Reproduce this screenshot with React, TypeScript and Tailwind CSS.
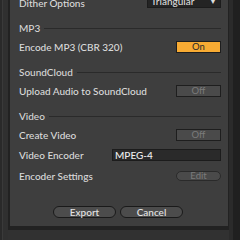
import React from "react";

const font = { fontFamily: 'Lato, "Open Sans", "Liberation Sans", sans-serif' };

function Section({ title, className = "" }: { title: string; className?: string }) {
  return (
    <div className={`flex h-[14px] items-center gap-[4px] ${className}`}>
      <span className="text-[10px] font-medium text-[#d6d6d6]">{title}</span>
      <div className="h-px flex-1 bg-[#2a2a2a]" />
    </div>
  );
}

function Toggle({ on }: { on: boolean }) {
  return (
    <div
      className={`flex h-[12px] w-[45px] items-center justify-center border border-[#1e1e1e] text-[9.5px] leading-none ${
        on ? "bg-[#f8ab33] text-[#2a2a2a]" : "bg-[#4a4a4a] text-[#7b7b7b]"
      }`}
    >
      {on ? "On" : "Off"}
    </div>
  );
}

function Row({ label, children, className = "" }: { label: string; children?: React.ReactNode; className?: string }) {
  return (
    <div className={`flex h-[14px] items-center justify-between ${className}`}>
      <span className="text-[10px] font-medium text-[#dadada]">{label}</span>
      {children}
    </div>
  );
}

export default function App() {
  return (
    <div className="flex h-[240px] w-[240px] overflow-hidden bg-[#2e2e2e]" style={font}>
      {/* left frame strip */}
      <div className="flex h-full w-[8px] shrink-0">
        <div className="w-[2px] bg-[#2a2a2a]" />
        <div className="w-px bg-[#3a3a3a]" />
        <div className="flex-1 bg-[#303030]" />
      </div>

      <div className="flex h-full flex-col">
        <div className="h-[230px] w-[221px] border-b-[4px] border-l-2 border-r border-[#222222] bg-[#3e3e3e] pl-[9px] pr-[7px]">
          <div className="-mt-[4px] flex flex-col">
            <Row label="Dither Options">
              <div className="-mt-[4px] flex h-[14px] w-[74px] items-center justify-between border border-[#1c1c1c] bg-[#242424] pl-[3px] pr-[3px]">
                <span className="text-[10px] font-medium text-[#dddddd]">Triangular</span>
                <span className="text-[8px] text-[#dddddd]">▼</span>
              </div>
            </Row>

            <Section title="MP3" className="mt-[11px]" />
            <Row label="Encode MP3 (CBR 320)" className="mt-[5px]">
              <Toggle on />
            </Row>

            <Section title="SoundCloud" className="mt-[11px]" />
            <Row label="Upload Audio to SoundCloud" className="mt-[5px]">
              <Toggle on={false} />
            </Row>

            <Section title="Video" className="mt-[11px]" />
            <Row label="Create Video" className="mt-[5px]">
              <Toggle on={false} />
            </Row>
            <Row label="Video Encoder" className="mt-[6px]">
              <div className="flex h-[12px] w-[109px] items-center border border-[#1c1c1c] bg-[#2a2a2a] pl-[2px]">
                <span className="text-[10px] font-medium text-[#eeeeee]">MPEG-4</span>
              </div>
            </Row>
            <Row label="Encoder Settings" className="mt-[7px]">
              <div className="flex h-[10px] w-[45px] items-center justify-center rounded-full border border-[#2a2a2a] bg-[#4a4a4a] text-[9.5px] leading-none text-[#7a7a7a]">
                Edit
              </div>
            </Row>

            <div className="mt-[23px] flex justify-center gap-[4px] pr-[4px]">
              <button className="flex h-[12px] w-[63px] items-center justify-center rounded-full border border-[#1a1a1a] bg-[#4c4c4c] text-[10px] font-medium leading-none text-[#e4e4e4]">
                Export
              </button>
              <button className="flex h-[12px] w-[63px] items-center justify-center rounded-full border border-[#1a1a1a] bg-[#4c4c4c] text-[10px] font-medium leading-none text-[#e4e4e4]">
                Cancel
              </button>
            </div>
          </div>
        </div>
        <div className="flex-1 bg-[#313131]" />
      </div>

      {/* right frame strip */}
      <div className="flex h-full flex-1">
        <div className="w-[4px] bg-[#2b2b2b]" />
        <div className="flex-1 bg-[#202020]" />
      </div>
    </div>
  );
}
